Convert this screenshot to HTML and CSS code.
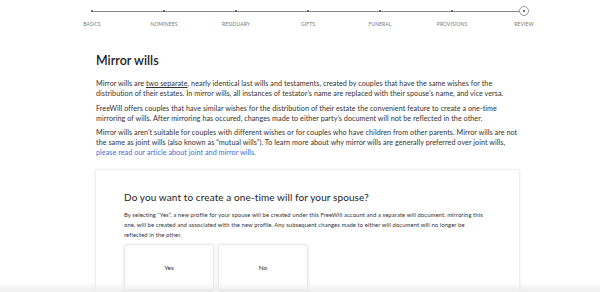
FILE: index.html
```html
<!DOCTYPE html>
<html lang="en">
<head>
  <meta charset="UTF-8" />
  <meta name="viewport" content="width=device-width, initial-scale=1.0"/>
  <title>Mirror wills</title>
  <link rel="stylesheet" href="styles.css">
</head>
<body>

  <div class="steps">
    <div class="step"><span class="dot"></span><span class="label">Basics</span></div>
    <div class="step"><span class="dot"></span><span class="label">Nominees</span></div>
    <div class="step"><span class="dot"></span><span class="label">Residuary</span></div>
    <div class="step"><span class="dot"></span><span class="label">Gifts</span></div>
    <div class="step"><span class="dot"></span><span class="label">Funeral</span></div>
    <div class="step"><span class="dot"></span><span class="label">Provisions</span></div>
    <div class="step current"><span class="dot"></span><span class="label">Review</span></div>
  </div>

  <div class="content">
    <h1 class="title">Mirror wills</h1>

    <p>Mirror wills are <u>two separate</u>, nearly identical last wills and testaments, created by couples that have the same wishes for the distribution of their estates. In mirror wills, all instances of testator’s name are replaced with their spouse’s name, and vice versa.</p>

    <p>FreeWill offers couples that have similar wishes for the distribution of their estate the convenient feature to create a one-time mirroring of wills. After mirroring has occured, changes made to either party’s document will not be reflected in the other.</p>

    <p>Mirror wills aren’t suitable for couples with different wishes or for couples who have children from other parents. Mirror wills are not the same as joint wills (also known as “mutual wills”). To learn more about why mirror wills are generally preferred over joint wills, <a href="#">please read our article about joint and mirror wills.</a></p>

    <div class="card">
      <h2 class="question">Do you want to create a one-time will for your spouse?</h2>
      <p class="note">By selecting “Yes”, a new profile for your spouse will be created under this FreeWill account and a separate will document, mirroring this one, will be created and associated with the new profile. Any subsequent changes made to either will document will no longer be reflected in the other.</p>
      <div class="choices">
        <button class="choice">Yes</button>
        <button class="choice">No</button>
      </div>
    </div>
  </div>

  <div class="bottom-fade"></div>

</body>
</html>
```

FILE: styles.css
```css
body {
  font-family: Lato, "Open Sans", sans-serif;
  background: #fff;
  color: #333;
  margin: 0;
  height: 292px;
  overflow: hidden;
}

.steps {
  position: relative;
  display: flex;
  width: 504px;
  margin-left: 56px;
  padding-top: 10px;
}

.steps::before {
  content: "";
  position: absolute;
  top: 11px;
  left: 36px;
  right: 36px;
  height: 1px;
  background: #8a8a8a;
}

.step {
  width: 72px;
  display: flex;
  flex-direction: column;
  align-items: center;
}

.dot {
  position: relative;
  width: 2px;
  height: 2px;
  border-radius: 50%;
  background: #444;
}

.step.current .dot {
  width: 10px;
  height: 10px;
  margin-top: -4px;
  margin-bottom: -4px;
  box-sizing: border-box;
  border: 1px solid #999;
  background: #fff;
}

.step.current .dot::after {
  content: "";
  position: absolute;
  left: 3px;
  top: 3px;
  width: 2px;
  height: 2px;
  border-radius: 50%;
  background: #444;
}

.label {
  margin-top: 9px;
  font-size: 5px;
  letter-spacing: 0.1px;
  color: #777;
  text-transform: uppercase;
}

.content {
  margin-left: 96px;
  width: 424px;
}

.title {
  font-size: 12.5px;
  font-weight: 600;
  color: #222;
  margin: 26px 0 11px;
}

.content p {
  font-size: 7.2px;
  letter-spacing: 0.05px;
  line-height: 10px;
  margin: 0 0 4.5px;
  margin-right: -3px;
}

.content a {
  color: #3b6fd6;
  text-decoration: none;
}

.card {
  margin-top: 11px;
  margin-left: -1px;
  padding: 21px 28px 0;
  border: 1px solid #eee;
  box-shadow: 0 1px 4px rgba(0,0,0,0.06);
  height: 140px;
}

.question {
  font-size: 10px;
  font-weight: 400;
  letter-spacing: 0.1px;
  color: #222;
  margin: 0 0 7px;
}

.content .note {
  font-size: 5.9px;
  letter-spacing: 0.08px;
  line-height: 10px;
  margin: 0 0 4px;
  padding-right: 6px;
}

.choices {
  display: flex;
  gap: 4px;
}

.choice {
  width: 90px;
  height: 46px;
  font-family: inherit;
  font-size: 6.5px;
  color: #333;
  background: #fff;
  border: 1px solid #eaeaea;
  border-radius: 2px;
  box-shadow: 0 1px 3px rgba(0,0,0,0.12);
  cursor: pointer;
}

.bottom-fade {
  position: fixed;
  left: 0;
  right: 0;
  bottom: 0;
  height: 10px;
  background: linear-gradient(to bottom, rgba(235,235,235,0), rgba(235,235,235,0.9));
}
```
